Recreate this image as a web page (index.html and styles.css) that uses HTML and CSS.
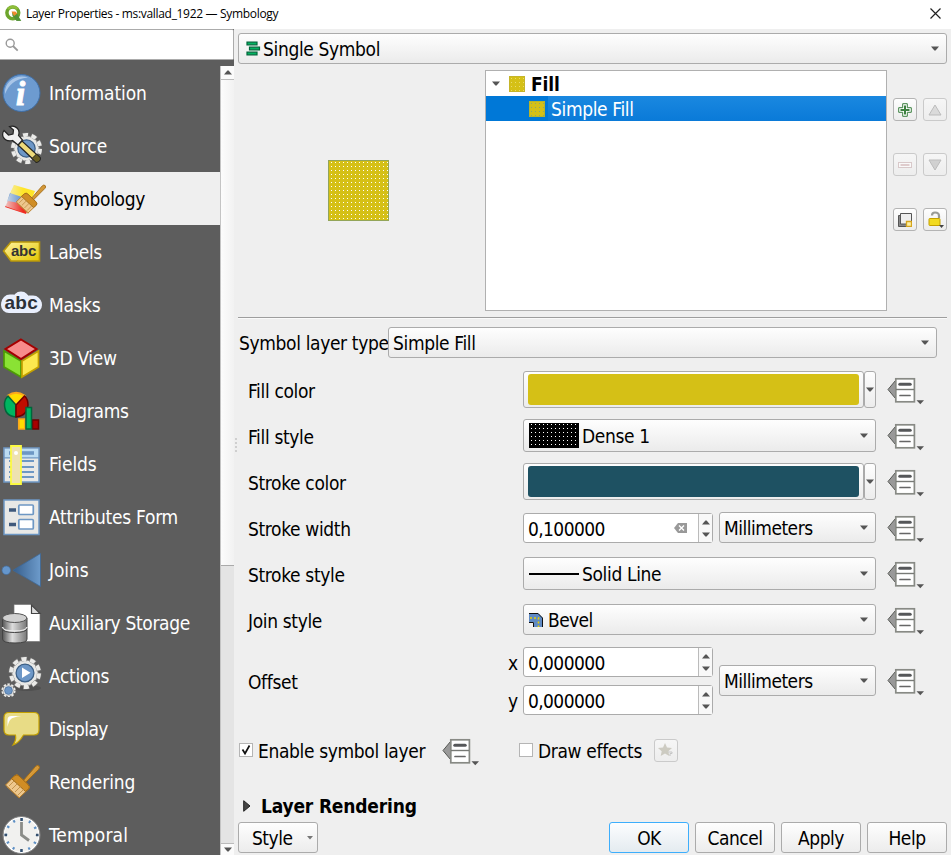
FILE: index.html
```html
<!DOCTYPE html>
<html lang="en">
<head>
<meta charset="utf-8">
<title>Layer Properties</title>
<link rel="stylesheet" href="styles.css">
</head>
<body>
<svg class="defs" width="0" height="0">
  <defs>
    <symbol id="override" viewBox="0 0 38 28">
      <path d="M8.5 3.5v18L1 12.5z" fill="#999" stroke="#555753" stroke-width="1"/>
      <rect x="8.8" y="1.8" width="18.6" height="23" fill="#fff" stroke="#888a85" stroke-width="1.7"/>
      <path d="M9 12.5h18" stroke="#777975" stroke-width="1.4"/>
      <path d="M12.8 7.3h10.4" stroke="#555759" stroke-width="3" stroke-linecap="round"/>
      <path d="M13 18.5h10" stroke="#666" stroke-width="1.7" stroke-linecap="round"/>
      <path d="M29.5 23.3h7.5l-3.7 4z" fill="#555"/>
    </symbol>
    <symbol id="down" viewBox="0 0 8 5"><path d="M0 .5h8L4.600 4.500h-1.200z" fill="#555"/></symbol>
    <symbol id="up" viewBox="0 0 8 5"><path d="M0 4.500h8L4.600.5h-1.200z" fill="#555"/></symbol>
    <pattern id="dots" width="4" height="4" patternUnits="userSpaceOnUse"><rect x="3" y="2" width="1" height="1" fill="#fff"/></pattern>
    <pattern id="dots2" width="4" height="4" patternUnits="userSpaceOnUse"><rect x="2" y="1" width="1" height="1" fill="#fff"/></pattern>
    <pattern id="dots3" width="4" height="4" patternUnits="userSpaceOnUse"><rect x="2" y="2" width="1" height="1" fill="#e9dc6c"/></pattern>
    <pattern id="dots4" width="4" height="4" patternUnits="userSpaceOnUse"><rect x="2" y="2" width="1" height="1" fill="#8fa66a"/></pattern>
    <linearGradient id="metal"><stop offset="0" stop-color="#555"/><stop offset=".4" stop-color="#ddd"/><stop offset="1" stop-color="#777"/></linearGradient>
    <linearGradient id="joinblue"><stop offset="0" stop-color="#365e8c"/><stop offset="1" stop-color="#6d9bcb"/></linearGradient>
    <linearGradient id="wood" x2="1" y2="1"><stop offset="0" stop-color="#e8b460"/><stop offset="1" stop-color="#c17d11"/></linearGradient>
    <linearGradient id="tag" x2="1" y2="1"><stop offset="0" stop-color="#fff3a0"/><stop offset="1" stop-color="#e3c600"/></linearGradient>
    <symbol id="brush" viewBox="0 0 36 36">
      <path d="M18.500 18.500L31.500 3.500q2-2 3.500-.5t-.5 3.500L21 20z" fill="url(#wood)" stroke="#a06a15"/>
      <path d="M11 12.500q2-1.500 4 .5l9 8.500q2 2 1 4l-10 9.500L1.500 22z" fill="#edc78d" stroke="#b47a25"/>
      <path d="M11 12.500q2-1.500 4 .5l9 8.500q2 2 1 4l-3.500 3L7.500 15.500z" fill="#d08d25" stroke="#a06a15"/>
      <path d="M5 23l6-6M8 26l6-6M11 29l6-6M14 32l6-6M3 24l13 11" stroke="#b9853c" stroke-width=".8" fill="none"/>
    </symbol>
    <symbol id="gear" viewBox="-20 -20 40 40">
      <circle r="15.500" fill="#e8e8e6" stroke="#777" stroke-width="1"/>
      <circle r="16.800" fill="none" stroke="#777" stroke-width="5.400" stroke-dasharray="7.200 3.356"/>
      <circle r="16.500" fill="none" stroke="#eaeae8" stroke-width="4.600" stroke-dasharray="6 4.367" stroke-dashoffset="-.5"/>
      <circle r="10.500" fill="#6d97c7" stroke="#3c5f85" stroke-width="1.500"/>
    </symbol>
  </defs>
</svg>
<div class="window">
  <header class="titlebar">
    <svg class="logo" width="17" height="17" viewBox="0 0 17 17"><circle cx="7.800" cy="7.800" r="5.900" fill="none" stroke="#6da52c" stroke-width="3.500"/><path d="M3 4A6 6 0 0 1 12.500 4" stroke="#8fbe39" stroke-width="2.500" fill="none"/><path d="M7 7l5 1.500 4 7.300h-4.300L7.500 11z" fill="#529236"/><path d="M6.500 6.500h3.800l2 2L9 11z" fill="#ef8a2d"/><path d="M12 11l4.300 4.800h-4.800L9 12" fill="#529236"/></svg>
    <span class="title">Layer Properties - ms:vallad_1922 — Symbology</span>
    <svg class="close" width="11" height="11" viewBox="0 0 11 11"><path d="M.5.5l10 10M10.500.5l-10 10" stroke="#222" stroke-width="1.200"/></svg>
  </header>
  <div class="body">
    <aside class="sidebar">
      <div class="search"><svg width="14" height="14" viewBox="0 0 14 14"><circle cx="5.200" cy="5.200" r="4" fill="none" stroke="#999" stroke-width="1.400"/><path d="M8 8l4.700 4.700" stroke="#999" stroke-width="1.800"/></svg></div>
      <div class="navwrap">
        <nav class="nav">
          <a class="item"><svg width="42" height="42" viewBox="0 0 42 42"><circle cx="21.500" cy="21" r="18.500" fill="#6d9bd0" stroke="#3f6fa8"/><path d="M5 22C4 9 17 2 28 5.500 14 7 9 13 5 22z" fill="#a9c6e8"/><text x="16" y="33" class="glyph-i">i</text></svg><span class="wide">Information</span></a>
          <a class="item"><svg width="42" height="42" viewBox="0 0 42 42"><use href="#gear" x="10" y="7" width="33" height="33"/><path d="M18 20l4-4 18 16.500q0 4-4 4.500z" fill="#eedb7b" stroke="#222" stroke-width="1.200"/><path d="M36 37.500l-4-4 4.500-4.500 4 4q0 4-4.500 4.500z" fill="#665c22" stroke="#222"/><path d="M4 5.500l4.500 4.500 4.500-1 .5-4L9.500 1.500q6-1.500 9 3.500 1 3 0 5.500l4 4.500-4.500 5-5.500-4.500Q5.500 17 3 11.500 2 8 4 5.500z" fill="#f0f0f0" stroke="#222" stroke-width="1.200"/></svg><span class="wide">Source</span></a>
          <a class="item selected"><svg width="46" height="42" viewBox="0 0 46 42"><defs><linearGradient id="fade"><stop offset="0" stop-color="#efefef" stop-opacity=".8"/><stop offset=".6" stop-color="#efefef" stop-opacity="0"/></linearGradient></defs><path d="M14 7l21 6-4 10-21-7z" fill="#ffe528"/><path d="M10 15l21 7-3 9-21-7z" fill="#5f8fcb"/><path d="M8 23l22 4-4 9-21-7z" fill="#ef2b20"/><path d="M14 7l21 6-8 23-22-8z" fill="url(#fade)"/><use href="#brush" x="15" y="4" width="31" height="33"/></svg><span>Symbology</span></a>
          <a class="item"><svg width="42" height="42" viewBox="0 0 42 42"><path d="M3.500 20l7.500-9h28.500v19H11z" fill="url(#tag)" stroke="#b9980b" stroke-width="1.600"/><text x="11" y="25" class="abc-tag" textLength="25">abc</text></svg><span>Labels</span></a>
          <a class="item"><svg width="42" height="42" viewBox="0 0 42 42"><path d="M10 19h3M21 16v3M29 20h4" stroke="#e9effd" stroke-width="17" stroke-linecap="round"/><path d="M9 21h25" stroke="#e9effd" stroke-width="16" stroke-linecap="round"/><text x="4.500" y="24.500" class="abc-mask" textLength="33">abc</text></svg><span>Masks</span></a>
          <a class="item"><svg width="42" height="42" viewBox="0 0 42 42"><path d="M4 14l17 10v16L4 30z" fill="#8ae234" stroke="#4e9a06" stroke-width="1.700"/><path d="M38.500 14L22 24v16l16.500-10z" fill="#fce94f" stroke="#c4a000" stroke-width="1.700"/><path d="M21 2.500L36.500 12 21 22 5.500 12z" fill="#f78b8b" stroke="#a40000" stroke-width="2"/></svg><span>3D View</span></a>
          <a class="item"><svg width="42" height="42" viewBox="0 0 42 42"><path d="M16 15L8 5.500Q16 0 24.500 5.500z" fill="#ffdd00" stroke="#fca81c" stroke-width="1.800"/><path d="M16 15v12Q4 26 4.500 13 5 9 8 6z" fill="#00b560" stroke="#00663b" stroke-width="1.500"/><path d="M16 15v12q11-1 12-12 0-6-3.500-9z" fill="#c00d00" stroke="#6b0000" stroke-width="1.500"/><path d="M18.800 29h6v10h-6z" fill="#ffdd00" stroke="#fca81c" stroke-width="1.700"/><path d="M32.500 30h6v9h-6z" fill="#a80000" stroke="#6b0000" stroke-width="1.500"/><path d="M26 17.500h5.500V39H26z" fill="#00b560" stroke="#00663b" stroke-width="1.500"/></svg><span>Diagrams</span></a>
          <a class="item"><svg width="42" height="42" viewBox="0 0 42 42"><path d="M4 5h35v34H4z" fill="#e8e8e6" stroke="#6d97c4" stroke-width="1.600"/><path d="M5 6h33v8.500H5z" fill="#bcdcf3"/><path d="M4 14.800h35" stroke="#6d97c4" stroke-width="1.200"/><path d="M9 10h25" stroke="#6d97c4" stroke-width="3.600"/><path d="M9 18h25M9 24h25M9 29h25M9 34h25" stroke="#6d97c4" stroke-width="1.800"/><path d="M11 3h10v38H11z" fill="#eee2b0" stroke="#fcfa42" stroke-width="1.800"/><circle cx="16" cy="10" r="2" fill="#fff"/></svg><span class="wide">Fields</span></a>
          <a class="item"><svg width="42" height="42" viewBox="0 0 42 42"><path d="M4 4h35v34.500H4z" fill="#e8e8e6" stroke="#6d97c4" stroke-width="1.500"/><path d="M9 14h7M9 28.500h7" stroke="#3f597c" stroke-width="3.400"/><rect x="18.800" y="9" width="14.500" height="9.500" rx="1" fill="#fff" stroke="#6d97c4" stroke-width="1.700"/><rect x="18.800" y="23.500" width="14.500" height="9.500" rx="1" fill="#fff" stroke="#6d97c4" stroke-width="1.700"/></svg><span class="form-label">Attributes Form</span></a>
          <a class="item"><svg width="42" height="42" viewBox="0 0 42 42"><circle cx="6.300" cy="21.300" r="4.300" fill="#6596cc" stroke="#436f9f" stroke-width=".7"/><path d="M13 21.300L40.500 4.500v33z" fill="url(#joinblue)" stroke="#3d6897" stroke-width=".8"/></svg><span class="wide">Joins</span></a>
          <a class="item"><svg width="42" height="42" viewBox="0 0 42 42"><path d="M14 2.500h17.500l8.500 9v28H14z" fill="#fff" stroke="#777" stroke-width=".7"/><path d="M31.500 3v8.500H40z" fill="#ddd" stroke="#444" stroke-width="1.200"/><path d="M2.500 16v21q0 4 12.500 4t12-4V16z" fill="url(#metal)" stroke="#444"/><ellipse cx="14.700" cy="16" rx="12.200" ry="4.500" fill="#d0d0d0" stroke="#555"/><path d="M2.500 25q0 4 12 4t12.500-4" fill="none" stroke="#e8e8e8" stroke-width="1.500"/><path d="M2.500 26.500q0 4 12 4t12.500-4" fill="none" stroke="#444"/></svg><span>Auxiliary Storage</span></a>
          <a class="item"><svg width="42" height="42" viewBox="0 0 42 42"><ellipse cx="27" cy="33" rx="14" ry="3" fill="#333" opacity=".3"/><use href="#gear" x="8" y="1" width="34" height="34"/><path d="M22 12.500v10.500l8.500-5.200z" fill="#fff"/><use href="#gear" x="1" y="28" width="15" height="15"/></svg><span>Actions</span></a>
          <a class="item"><svg width="42" height="42" viewBox="0 0 42 42"><path d="M9 4.500h25q5 0 5 5V22q0 5-5 5H23.500Q19 35 13 37q3.500-5 2.500-10H9q-5 0-5-5V9.500q0-5 5-5z" fill="#e8dc86" stroke="#c4a000" stroke-width="1.200"/><path d="M7.500 19V12q0-4 4-4h10q-9 1-11 3.500-2 2-3 7.500z" fill="#fff"/></svg><span class="tight">Display</span></a>
          <a class="item"><svg width="42" height="42" viewBox="0 0 42 42"><use href="#brush" x="4" y="2" width="36" height="36"/></svg><span class="wide">Rendering</span></a>
          <a class="item"><svg width="42" height="42" viewBox="0 0 42 42"><circle cx="21.500" cy="21" r="17.500" fill="#f1f1ef" stroke="#fff" stroke-width="1.500"/><circle cx="21.500" cy="21" r="18.500" fill="none" stroke="#888"/><circle cx="21.500" cy="21" r="15.500" fill="none" stroke="#5d8fc4" stroke-width="2.600" stroke-dasharray="2 6.116" stroke-dashoffset="1"/><path d="M21.500 4v3M21.500 35v3M4.500 21h2.500M36 21h2.500" stroke="#35506e" stroke-width="2.400"/><path d="M21.500 8v13l7.500 5.500" stroke="#8a8c88" stroke-width="2.800" fill="none"/></svg><span class="temporal">Temporal</span></a>
        </nav>
        <div class="scrollbar">
          <div class="sb-btn"><svg width="8" height="5"><use href="#up"/></svg></div>
          <div class="sb-thumb"></div>
          <div class="sb-track"></div>
          <div class="sb-btn sb-down"><svg width="8" height="5"><use href="#down"/></svg></div>
        </div>
      </div>
    </aside>
    <div class="splitter"></div>
    <main class="main">
      <div class="combo renderer"><svg width="15" height="16" viewBox="0 0 15 16"><path d="M1 1.200h10v2.600H1zM3.500 6.200h10v2.600h-10zM1 11.200h10v2.600H1z" fill="#00b560" stroke="#00663b" stroke-width="1.200"/></svg><span>Single Symbol</span><svg class="arr" width="8" height="5"><use href="#down"/></svg></div>
      <section class="symbol">
        <div class="preview"><svg width="61" height="61" shape-rendering="crispEdges"><rect width="61" height="61" fill="#d5c016"/><rect width="61" height="61" fill="url(#dots)"/><rect x=".5" y=".5" width="60" height="60" fill="none" stroke="#93a559"/></svg></div>
        <div class="tree">
          <div class="trow root"><svg class="exp" width="8" height="5"><use href="#down"/></svg><svg width="16" height="16" shape-rendering="crispEdges"><rect width="16" height="16" fill="#d5c016"/><rect width="16" height="16" fill="url(#dots3)"/><rect x=".5" y=".5" width="15" height="15" fill="none" stroke="#c5b52a"/></svg><span class="wide">Fill</span></div>
          <div class="trow leaf"><svg width="16" height="16" shape-rendering="crispEdges"><rect width="16" height="16" fill="#d5c016"/><rect width="16" height="16" fill="url(#dots4)"/><rect x=".5" y=".5" width="15" height="15" fill="none" stroke="#b8b52a"/></svg><span>Simple Fill</span></div>
        </div>
        <div class="tools">
          <button class="tool"><svg width="14" height="14" viewBox="0 0 14 14"><path d="M4.700.7h4.600v4h4v4.600h-4v4H4.700v-4h-4V4.700h4z" fill="#fff" stroke="#3c8040"/><path d="M7 2.500v9M2.500 7h9" stroke="#3c8040" stroke-width="2"/></svg></button>
          <button class="tool off"><svg width="14" height="12" viewBox="0 0 14 12"><path d="M7 1l6 10H1z" fill="#ccc" stroke="#999"/></svg></button>
          <button class="tool off"><svg width="14" height="6" viewBox="0 0 14 6"><rect x=".5" y=".5" width="13" height="5" fill="#fff" stroke="#c9aeb0"/><path d="M2.500 3h9" stroke="#d4b4b6" stroke-width="2"/></svg></button>
          <button class="tool off"><svg width="14" height="12" viewBox="0 0 14 12"><path d="M7 11L1 1h12z" fill="#bbb" stroke="#999"/></svg></button>
          <button class="tool"><svg width="14" height="14" viewBox="0 0 14 14"><path d="M.5 2.500h10v11H.5z" fill="#888" stroke="#555"/><path d="M2.500.5h11v10.500h-11z" fill="#eee" stroke="#555"/><path d="M8.500 8.500h5v5h-5z" fill="#fff0a0" stroke="#d5a51c" stroke-width="1.300"/></svg></button>
          <button class="tool"><svg width="17" height="17" viewBox="0 0 17 17"><path d="M5 4.500Q5 1.500 8 1.500q4 0 4 3.500v2" stroke="#999b96" stroke-width="2.200" fill="none"/><rect x="2" y="7.500" width="11" height="7" rx=".8" fill="#f2da20" stroke="#c4a000"/><path d="M12 14h5l-2.500 3z" fill="#444"/></svg></button>
        </div>
      </section>
      <div class="rule"></div>
      <div class="typerow"><label>Symbol layer type</label><div class="combo"><span>Simple Fill</span><svg class="arr" width="8" height="5"><use href="#down"/></svg></div></div>
      <section class="form">
        <div class="row"><label>Fill color</label><div class="field raised"><div class="colorbtn"><i class="fillc"></i></div><div class="drop"><svg width="8" height="5"><use href="#down"/></svg></div></div><svg class="ovr" width="38" height="28"><use href="#override"/></svg></div>
        <div class="row"><label>Fill style</label><div class="field raised"><div class="combo tall"><svg class="dense" width="50" height="25" shape-rendering="crispEdges"><rect width="50" height="25"/><rect width="50" height="25" fill="url(#dots2)"/></svg><span>Dense 1</span><svg class="arr" width="8" height="5"><use href="#down"/></svg></div></div><svg class="ovr" width="38" height="28"><use href="#override"/></svg></div>
        <div class="row"><label>Stroke color</label><div class="field raised"><div class="colorbtn"><i class="strokec"></i></div><div class="drop"><svg width="8" height="5"><use href="#down"/></svg></div></div><svg class="ovr" width="38" height="28"><use href="#override"/></svg></div>
        <div class="row"><label>Stroke width</label><div class="field split"><div class="spin"><span>0,100000</span><svg class="clear" width="13" height="10" viewBox="0 0 13 10"><path d="M0 5L4 0h9v10H4z" fill="#999"/><path d="M5 2.500l5 5M10 2.500l-5 5" stroke="#fff" stroke-width="1.400"/></svg><div class="steps"><svg width="8" height="5"><use href="#up"/></svg><svg width="8" height="5"><use href="#down"/></svg></div></div><div class="combo unit"><span>Millimeters</span><svg class="arr" width="8" height="5"><use href="#down"/></svg></div></div><svg class="ovr" width="38" height="28"><use href="#override"/></svg></div>
        <div class="row"><label>Stroke style</label><div class="field raised"><div class="combo tall"><i class="line"></i><span>Solid Line</span><svg class="arr" width="8" height="5"><use href="#down"/></svg></div></div><svg class="ovr" width="38" height="28"><use href="#override"/></svg></div>
        <div class="row"><label>Join style</label><div class="field raised"><div class="combo join"><svg width="14" height="14" viewBox="0 0 14 14"><path d="M0 0h9l5 5v9H5V9H0z" fill="#5f8ac4"/><path d="M0 .5h9L13.500 5v9M0 9.500h4.500V14" stroke="#111" fill="none"/><path d="M1 5h8.500v9" stroke="#e8d000" stroke-width="1.600" stroke-dasharray="2 2" fill="none"/></svg><span class="tight">Bevel</span><svg class="arr" width="8" height="5"><use href="#down"/></svg></div></div><svg class="ovr" width="38" height="28"><use href="#override"/></svg></div>
        <div class="row offset"><label>Offset</label><div class="xy"><span>x</span><span>y</span></div><div class="field split"><div class="spins"><div class="spin"><span>0,000000</span><div class="steps"><svg width="8" height="5"><use href="#up"/></svg><svg width="8" height="5"><use href="#down"/></svg></div></div><div class="spin"><span>0,000000</span><div class="steps"><svg width="8" height="5"><use href="#up"/></svg><svg width="8" height="5"><use href="#down"/></svg></div></div></div><div class="combo unit"><span>Millimeters</span><svg class="arr" width="8" height="5"><use href="#down"/></svg></div></div><svg class="ovr" width="38" height="28"><use href="#override"/></svg></div>
      </section>
      <div class="checks">
        <div class="enable"><i class="box"><svg width="12" height="12" viewBox="0 0 12 12"><path d="M2.500 5.500l2.500 4 4.500-8" stroke="#111" stroke-width="1.700" fill="none"/></svg></i><span>Enable symbol layer</span><svg class="ovr" width="38" height="28"><use href="#override"/></svg></div>
        <div class="effects"><i class="box"></i><span>Draw effects</span><button class="tool off"><svg width="15" height="14" viewBox="0 0 15 14"><path d="M7 0l2 4.500 5 .5-3.700 3.200 1 4.800L7 10.500 2.700 13l1-4.800L0 5l5-.5z" fill="#b5b2a2"/><path d="M10 9h4v1.500h-2V13" stroke="#aaa" fill="none"/></svg></button></div>
      </div>
      <div class="group"><svg width="8" height="12" viewBox="0 0 8 12"><path d="M.7.700L7 6 .7 11.300z" fill="#444" stroke="#222"/></svg><span>Layer Rendering</span></div>
      <footer class="footer">
        <button class="btn style"><span>Style</span><svg width="6" height="4" viewBox="0 0 6 4"><path d="M0 0h6L3 3.500z" fill="#777"/></svg></button>
        <button class="btn ok">OK</button><button class="btn">Cancel</button><button class="btn">Apply</button><button class="btn">Help</button>
      </footer>
    </main>
  </div>
</div>
</body>
</html>
```
FILE: styles.css
```css
* { box-sizing: border-box; }
body {
  margin: 0;
  background: #efefef;
  color: #000;
  font-family: "DejaVu Sans Condensed", "DejaVu Sans", sans-serif;
  font-stretch: condensed;
  font-size: 19px;
  line-height: 24px;
  letter-spacing: -0.35px;
}
.defs { position: absolute; }
svg { display: block; flex: none; }
span, label { white-space: nowrap; }
button { font: inherit; letter-spacing: inherit; color: inherit; padding: 0; }
.window { width: 951px; height: 855px; overflow: hidden; display: flex; flex-direction: column; }
.wide { letter-spacing: -0.1px; }
.tight { letter-spacing: -0.6px; }
.form-label { letter-spacing: -0.25px; }
.temporal { letter-spacing: 0.15px; }

.titlebar { height: 29px; flex: none; background: #fff; display: flex; align-items: center; padding: 0 10px 2px 5px; }
.title { font-family: "Open Sans", "Noto Sans", sans-serif; font-stretch: normal; font-size: 12px; letter-spacing: -0.32px; margin-left: 4px; padding-top: 1px; flex: 1; }

.body { flex: 1; display: flex; min-height: 0; }
.sidebar { width: 234px; background: #5d5d5d; display: flex; flex-direction: column; }
.search { height: 31px; flex: none; width: 234px; background: #fff; border: 1px solid #ababab; border-left: 0; border-radius: 0 2px 2px 0; padding: 8px 5px; }
.navwrap { margin-top: 6px; flex: 1; display: flex; min-height: 0; }
.nav { width: 220px; overflow: hidden; }
.item { height: 53px; display: flex; align-items: center; gap: 7px; color: #fff; }
.item.selected { background: #efefef; color: #000; }
.glyph-i { font: italic bold 33px "Liberation Serif", serif; fill: #fff; stroke: #fff; stroke-width: 1px; }
.abc-tag { font: bold 15px "Liberation Sans", sans-serif; fill: #333; }
.abc-mask { font: bold 19px "Liberation Sans", sans-serif; fill: #2c3138; }

.scrollbar { width: 14px; display: flex; flex-direction: column; background: #e4e4e4; border-left: 1px solid #c4c4c4; }
.sb-btn { height: 14px; flex: none; background: #fbfbfb; border-bottom: 1px solid #bbb; display: flex; align-items: center; justify-content: center; }
.sb-thumb { height: 486px; background: linear-gradient(90deg, #fcfcfc, #f2f2f2); border-bottom: 1px solid #aaa; }
.sb-track { flex: 1; }
.sb-down { height: 12px; border-bottom: 0; border-top: 1px solid #bbb; }
.splitter { width: 4px; background: radial-gradient(circle, #aaa 0.6px, transparent 0.8px) 0 0 / 4px 4px repeat-y; clip-path: inset(407px 0 403px 0); }

.main { flex: 1; display: flex; flex-direction: column; padding: 4px 4px 0 0; }
.combo { height: 31px; flex: none; border: 1px solid #ababab; border-radius: 3px; background: linear-gradient(#fefefe, #ebebeb); display: flex; align-items: center; padding: 0 7px 0 4px; }
.combo .arr { margin-left: auto; }
.renderer { padding-left: 7px; }
.renderer span { margin-left: 2px; }

.symbol { height: 253px; flex: none; display: flex; align-items: flex-start; }
.preview { width: 247px; height: 253px; padding: 96px 0 0 90px; }
.tree { width: 402px; height: 241px; margin-top: 6px; background: #fff; border: 1px solid #b0b0b0; }
.trow { height: 25px; display: flex; align-items: center; }
.trow span { padding-top: 1px; }
.root { font-weight: bold; padding-left: 6px; }
.root .exp { margin-right: 9px; }
.root span { margin-left: 6px; }
.leaf { color: #fff; padding-left: 43px; background: linear-gradient(90deg, #0078d7 62px, transparent 62px), linear-gradient(#1a88e0, #0a7ad8); }
.leaf span { margin-left: 6px; }
.tools { margin: 34px 0 0 6px; display: grid; grid-template-columns: 24px 24px; grid-auto-rows: 23px; gap: 32px 6px; }
.tool { width: 24px; height: 23px; border: 1px solid #b4b4b4; border-radius: 3px; background: linear-gradient(#fefefe, #ececec); display: flex; align-items: center; justify-content: center; }
.off { border-color: #cacaca; background: linear-gradient(#f6f6f6, #ededed); }
.off svg { opacity: 0.6; }

.rule { height: 2px; flex: none; border-top: 1px solid #9e9e9e; border-bottom: 1px solid #fafafa; }
.typerow { margin-top: 8px; display: flex; height: 31px; flex: none; align-items: center; padding: 0 10px 0 1px; }
.typerow label { width: 149px; }
.typerow .combo { flex: 1; }

.form { margin-top: 9px; }
.row { height: 46px; display: flex; align-items: center; padding-left: 10px; }
.row label { width: 275px; padding-top: 1px; }
.field { width: 353px; display: flex; align-items: center; }
.field.raised { margin-bottom: 1px; }
.field > .combo { flex: 1; }
.ovr { margin: 2px 0 0 11px; }
.colorbtn { width: 341px; height: 37px; border: 1px solid #ababab; border-radius: 3px; background: linear-gradient(#fefefe, #ececec); padding: 2px 4px 3px 4px; }
.colorbtn i { display: block; height: 31px; width: 331px; border-radius: 3px; }
.fillc { background: #d5c016; }
.strokec { background: #1e5162; }
.drop { width: 12px; height: 37px; border: 1px solid #ababab; border-radius: 3px; background: linear-gradient(#fefefe, #ececec); display: flex; align-items: center; justify-content: center; }
.combo.tall { height: 33px; padding-left: 5px; }
.tall span { margin-left: 3px; }
.line { width: 50px; height: 2px; background: #000; }
.join { padding-left: 5px; }
.join span { margin-left: 5px; }
.unit { margin-bottom: 1px; }
.unit span { letter-spacing: -0.5px; }
.field.split { gap: 6px; }
.spin { width: 190px; height: 30px; background: #fff; border: 1px solid #ababab; border-radius: 3px; display: flex; align-items: center; padding-left: 4px; }
.spin span { flex: 1; padding-top: 1px; letter-spacing: -0.6px; }
.clear { margin-right: 11px; }
.steps { width: 14px; height: 28px; border-left: 1px solid #bbb; display: flex; flex-direction: column; justify-content: center; align-items: center; gap: 7px; background: #f8f8f8; }
.offset { height: 76px; }
.offset label { width: 260px; }
.xy { width: 15px; display: flex; flex-direction: column; gap: 14px; padding-top: 2px; }
.spins { display: flex; flex-direction: column; gap: 8px; }

.checks { height: 62px; flex: none; display: flex; align-items: center; }
.enable { width: 281px; display: flex; align-items: center; padding-left: 1px; }
.effects { display: flex; align-items: center; }
.box { width: 14px; height: 14px; border: 1px solid #b5b5b5; background: #fff; margin-right: 5px; }
.enable span, .effects span { padding-top: 1px; }
.enable .ovr { margin: 3px 0 0 17px; }
.effects .tool { margin-left: 12px; }
.group { height: 41px; flex: none; display: flex; align-items: flex-end; font-weight: bold; letter-spacing: -0.18px; padding: 0 0 4px 5px; gap: 10px; }
.group svg { margin-bottom: 6px; }
.footer { display: flex; gap: 6px; }
.btn { width: 80px; height: 31px; border: 1px solid #ababab; border-radius: 3px; background: linear-gradient(#fefefe, #ececec); padding-top: 1px; letter-spacing: -0.5px; }
.style { margin-right: auto; display: flex; align-items: center; justify-content: space-between; padding: 0 4px 0 13px; }
.ok { border-color: #3daefc; background: linear-gradient(#fcfdfe, #e4ebf0); }
```
